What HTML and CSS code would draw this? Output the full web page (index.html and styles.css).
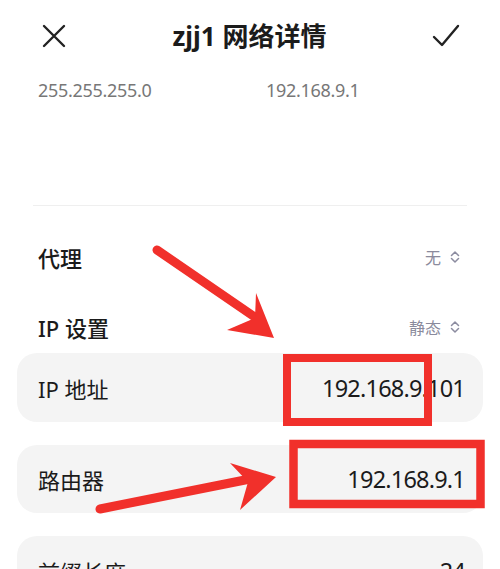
FILE: index.html
```html
<!DOCTYPE html>
<html lang="zh">
<head>
<meta charset="utf-8">
<link rel="stylesheet" href="styles.css">
</head>
<body>
<div class="page">
  <header class="topbar">
    <svg class="icon" width="26" height="26" viewBox="0 0 26 26"><path d="M3 3 L23 23 M23 3 L3 23" stroke="#222" stroke-width="2.4" stroke-linecap="round" fill="none"/></svg>
    <h1 class="title">zjj1 网络详情</h1>
    <svg class="icon" width="28" height="26" viewBox="0 0 28 26"><path d="M2 14 L10 22 L26 3" stroke="#222" stroke-width="2.4" stroke-linecap="round" stroke-linejoin="round" fill="none"/></svg>
  </header>
  <div class="summary">
    <span class="sum-a">255.255.255.0</span>
    <span class="sum-b">192.168.9.1</span>
  </div>
  <div class="divider"></div>
  <div class="setting first">
    <span class="label">代理</span>
    <span class="value">无<svg class="chev" width="10" height="14" viewBox="0 0 10 14"><path d="M1.5 5.5 L5 2 L8.5 5.5 M1.5 8.5 L5 12 L8.5 8.5" stroke="#8c8ca0" stroke-width="1.5" fill="none" stroke-linecap="round" stroke-linejoin="round"/></svg></span>
  </div>
  <div class="setting second">
    <span class="label">IP 设置</span>
    <span class="value">静态<svg class="chev" width="10" height="14" viewBox="0 0 10 14"><path d="M1.5 5.5 L5 2 L8.5 5.5 M1.5 8.5 L5 12 L8.5 8.5" stroke="#8c8ca0" stroke-width="1.5" fill="none" stroke-linecap="round" stroke-linejoin="round"/></svg></span>
  </div>
  <div class="cards">
    <div class="card"><span class="clabel">IP 地址</span><span class="cvalue">192.168.9.101</span></div>
    <div class="card"><span class="clabel">路由器</span><span class="cvalue">192.168.9.1</span></div>
    <div class="card"><span class="clabel">前缀长度</span><span class="cvalue">24</span></div>
  </div>
  <svg class="marks" width="500" height="569" viewBox="0 0 500 569">
    <g fill="#f1302b" stroke="none">
      <path d="M157 250 L262 322" stroke="#f1302b" stroke-width="9" stroke-linecap="round" fill="none"/>
      <polygon points="274,338 256,293 255,318 227,330"/>
      <path d="M100 509 L250 479" stroke="#f1302b" stroke-width="9" stroke-linecap="round" fill="none"/>
      <polygon points="276,477 230,463 248,482 240,510"/>
    </g>
    <rect x="287" y="358" width="141" height="64" fill="none" stroke="#f1302b" stroke-width="8"/>
    <rect x="293.5" y="444" width="187" height="60" fill="none" stroke="#f1302b" stroke-width="8.5"/>
  </svg>
</div>
</body>
</html>
```
FILE: styles.css
```css
html, body {
  margin: 0;
  padding: 0;
  background: #ffffff;
}
body {
  font-family: "Noto Sans", "Noto Sans CJK SC", sans-serif;
  color: #1b1b1b;
}
.page {
  position: relative;
  width: 500px;
  height: 569px;
  overflow: hidden;
}
.topbar {
  height: 72px;
  display: flex;
  align-items: center;
  justify-content: space-between;
  padding: 0 40px 0 41px;
}
.icon { display: block; }
.title {
  margin: 0;
  font-size: 26px;
  font-weight: 700;
  line-height: 1;
  letter-spacing: 0;
}
.summary {
  height: 36px;
  display: flex;
  align-items: center;
  padding-left: 38px;
  font-size: 18px;
  letter-spacing: -0.3px;
  color: #777777;
}
.sum-a { width: 228px; }
.divider {
  height: 1px;
  background: #efefef;
  margin: 97px 33px 0 33px;
}
.setting {
  height: 52px;
  display: flex;
  align-items: center;
  justify-content: space-between;
  padding: 0 40px 0 38px;
}
.setting.first { margin-top: 25px; }
.setting.second { margin-top: 18px; }
.label {
  font-size: 22px;
  font-weight: 500;
}
.value {
  display: flex;
  align-items: center;
  gap: 9px;
  font-size: 16px;
  color: #8a8a9c;
}
.chev { display: block; }
.cards {
  display: flex;
  flex-direction: column;
  gap: 23px;
  margin: 0 17px;
}
.card {
  height: 69px;
  border-radius: 20px;
  background: #f4f4f4;
  display: flex;
  align-items: center;
  justify-content: space-between;
  padding: 0 18px 0 21px;
  font-size: 22px;
}
.card:nth-child(2) { height: 68px; }
.cvalue {
  color: #1b1b1b;
  font-size: 23.5px;
  letter-spacing: -0.8px;
}
.marks {
  position: absolute;
  left: 0;
  top: 0;
  pointer-events: none;
}
```
